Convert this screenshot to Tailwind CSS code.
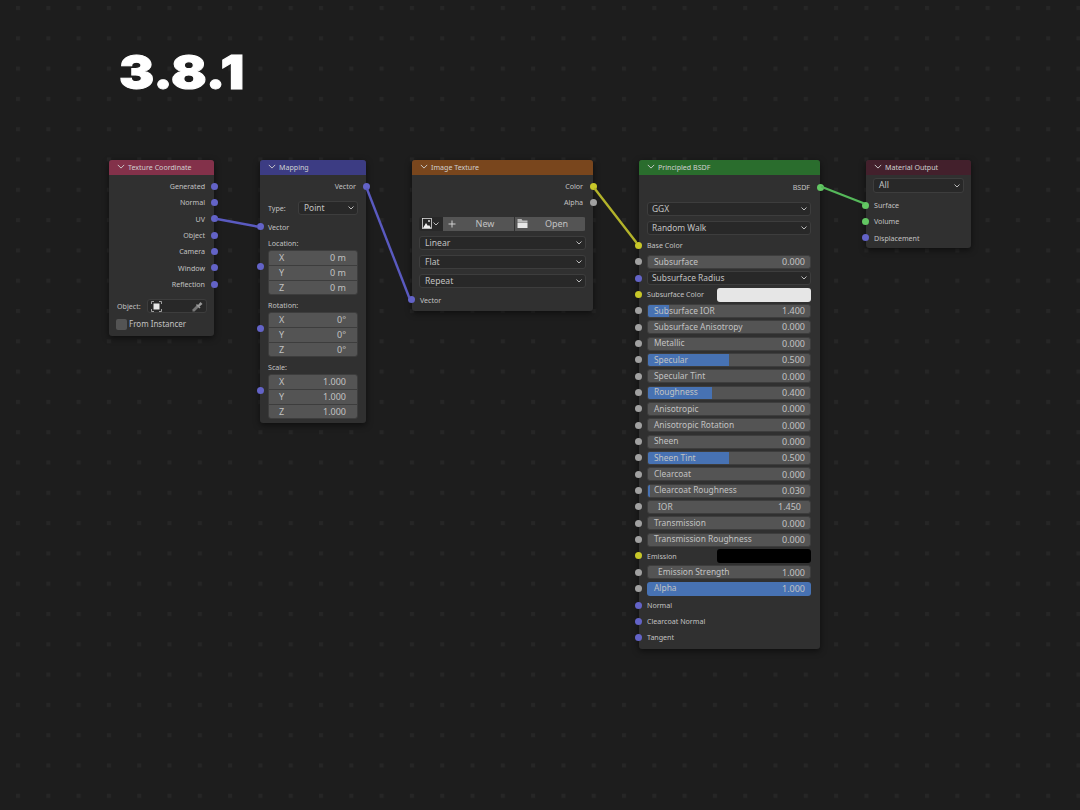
<!DOCTYPE html>
<html lang="en">
<head>
    <meta charset="UTF-8">
    <title>Blender 3.8.1 nodes</title>
    <script src="https://cdn.jsdelivr.net/npm/@tailwindcss/browser@4"></script>
</head>
<body class="bg-[#1d1d1d]">
<div class="relative w-[1080px] h-[810px] overflow-hidden bg-[#1d1d1d] font-['Noto_Sans',sans-serif] text-[#c2c2c2] text-[7.1px]">

    <!-- dot grid -->
    <svg class="absolute inset-0" width="1080" height="810">
        <defs>
            <pattern id="grid" x="16" y="6" width="30.3" height="30.3" patternUnits="userSpaceOnUse">
                <rect width="4" height="4" fill="#262626"/>
            </pattern>
        </defs>
        <rect width="1080" height="810" fill="url(#grid)"/>
    </svg>

    <h1 class="absolute left-[119px] top-[44px] origin-left scale-x-[1.12] font-['Inter',sans-serif] font-black text-[47px] leading-[56px] text-white [-webkit-text-stroke:1px_white]">3.8.1</h1>

    <!-- Texture Coordinate -->
    <section class="absolute left-[109px] top-[160px] w-[105px] h-[176px] rounded-[3px] bg-[#303030] shadow-[0_2px_6px_rgba(0,0,0,0.55)] flex flex-col">
        <header class="h-[15px] rounded-t-[3px] bg-[#83314a] flex items-center pl-[8px] gap-[3px] text-[#d0d0d0]">
            <svg class="-mt-[2px]" width="8" height="5" viewBox="0 0 10 6"><path d="M1 1l4 4 4-4" fill="none" stroke="#ccc" stroke-width="1.2"/></svg>
            <span>Texture Coordinate</span>
        </header>
        <div class="pt-[3px] flex flex-col">
            <div class="relative h-[16.35px] flex items-center justify-end pr-[9px]">Generated<i class="absolute right-[-3.5px] top-[4.6px] size-[7px] rounded-full bg-[#6363c7]"></i></div>
            <div class="relative h-[16.35px] flex items-center justify-end pr-[9px]">Normal<i class="absolute right-[-3.5px] top-[4.6px] size-[7px] rounded-full bg-[#6363c7]"></i></div>
            <div class="relative h-[16.35px] flex items-center justify-end pr-[9px]">UV<i class="absolute right-[-3.5px] top-[4.6px] size-[7px] rounded-full bg-[#6363c7]"></i></div>
            <div class="relative h-[16.35px] flex items-center justify-end pr-[9px]">Object<i class="absolute right-[-3.5px] top-[4.6px] size-[7px] rounded-full bg-[#6363c7]"></i></div>
            <div class="relative h-[16.35px] flex items-center justify-end pr-[9px]">Camera<i class="absolute right-[-3.5px] top-[4.6px] size-[7px] rounded-full bg-[#6363c7]"></i></div>
            <div class="relative h-[16.35px] flex items-center justify-end pr-[9px]">Window<i class="absolute right-[-3.5px] top-[4.6px] size-[7px] rounded-full bg-[#6363c7]"></i></div>
            <div class="relative h-[16.35px] flex items-center justify-end pr-[9px]">Reflection<i class="absolute right-[-3.5px] top-[4.6px] size-[7px] rounded-full bg-[#6363c7]"></i></div>
            <div class="mt-[6px] h-[16px] flex items-center pl-[8px] pr-[7px] justify-between">
                <span>Object:</span>
                <div class="w-[60px] h-[14px] rounded-[3px] bg-[#282828] border border-[#3d3d3d] flex items-center justify-between px-[3px]">
                    <svg width="11" height="11" viewBox="0 0 11 11"><rect x="2.5" y="2.5" width="6" height="6" fill="#e6e6e6"/><path d="M.5 3V.5H3M8 .5h2.5V3M.5 8v2.5H3M8 10.5h2.5V8" fill="none" stroke="#bbb" stroke-width=".8"/></svg>
                    <svg width="11" height="11" viewBox="0 0 11 11"><path d="M.5 10.5v-2l4.5-4.5 2 2-4.5 4.5z" fill="#777"/><path d="M5 3l1 1 2.5-3 2 2-3 2.5 1 1-1 1L4 4z" fill="#9a9a9a"/></svg>
                </div>
            </div>
            <div class="mt-[3px] h-[14px] flex items-center pl-[7px] gap-[2px] text-[8px]">
                <span class="size-[11px] rounded-[2px] bg-[#545454]"></span>
                <span>From Instancer</span>
            </div>
        </div>
    </section>

    <!-- Mapping -->
    <section class="absolute left-[260px] top-[160px] w-[106px] h-[263px] rounded-[3px] bg-[#303030] shadow-[0_2px_6px_rgba(0,0,0,0.55)] flex flex-col">
        <header class="h-[15px] rounded-t-[3px] bg-[#3c3c83] flex items-center pl-[8px] gap-[3px] text-[#d0d0d0]">
            <svg class="-mt-[2px]" width="8" height="5" viewBox="0 0 10 6"><path d="M1 1l4 4 4-4" fill="none" stroke="#ccc" stroke-width="1.2"/></svg>
            <span>Mapping</span>
        </header>
        <div class="pt-[3px] flex flex-col">
            <div class="relative h-[16.35px] flex items-center justify-end pr-[10px]">Vector<i class="absolute right-[-3.5px] top-[4.6px] size-[7px] rounded-full bg-[#6363c7]"></i></div>
            <div class="mt-[4px] h-[19px] flex items-center pl-[8px] pr-[8px] justify-between">
                <span>Type:</span>
                <div class="w-[60px] h-[14px] rounded-[3px] bg-[#282828] border border-[#3d3d3d] flex items-center justify-between pl-[5px] pr-[3px] text-[8.4px]">
                    <span>Point</span>
                    <svg width="6" height="4" viewBox="0 0 6 4"><path d="M.5 .5L3 3 5.5 .5" fill="none" stroke="#ccc" stroke-width=".9"/></svg>
                </div>
            </div>
            <div class="relative mt-[1.5px] h-[16.35px] flex items-center pl-[8px]">Vector<i class="absolute left-[-3.5px] top-[4.6px] size-[7px] rounded-full bg-[#6363c7]"></i></div>
            <div class="h-[15px] pt-[1px] flex items-center pl-[8px]">Location:</div>
            <div class="mx-[8px] h-[45px] rounded-[3px] overflow-hidden flex flex-col gap-[1px] bg-[#3d3d3d] text-[9px] border border-[#3d3d3d]">
                <div class="flex-1 bg-[#545454] flex items-center justify-between pl-[10px] pr-[11px]"><span>X</span><span>0 m</span></div>
                <div class="flex-1 bg-[#545454] flex items-center justify-between pl-[10px] pr-[11px]"><span>Y</span><span>0 m</span></div>
                <div class="flex-1 bg-[#545454] flex items-center justify-between pl-[10px] pr-[11px]"><span>Z</span><span>0 m</span></div>
            </div>
            <div class="h-[17px] pt-[3px] flex items-center pl-[8px]">Rotation:</div>
            <div class="mx-[8px] h-[45px] rounded-[3px] overflow-hidden flex flex-col gap-[1px] bg-[#3d3d3d] text-[9px] border border-[#3d3d3d]">
                <div class="flex-1 bg-[#545454] flex items-center justify-between pl-[10px] pr-[11px]"><span>X</span><span>0°</span></div>
                <div class="flex-1 bg-[#545454] flex items-center justify-between pl-[10px] pr-[11px]"><span>Y</span><span>0°</span></div>
                <div class="flex-1 bg-[#545454] flex items-center justify-between pl-[10px] pr-[11px]"><span>Z</span><span>0°</span></div>
            </div>
            <div class="h-[17px] pt-[3px] flex items-center pl-[8px]">Scale:</div>
            <div class="mx-[8px] h-[45px] rounded-[3px] overflow-hidden flex flex-col gap-[1px] bg-[#3d3d3d] text-[9px] border border-[#3d3d3d]">
                <div class="flex-1 bg-[#545454] flex items-center justify-between pl-[10px] pr-[11px]"><span>X</span><span>1.000</span></div>
                <div class="flex-1 bg-[#545454] flex items-center justify-between pl-[10px] pr-[11px]"><span>Y</span><span>1.000</span></div>
                <div class="flex-1 bg-[#545454] flex items-center justify-between pl-[10px] pr-[11px]"><span>Z</span><span>1.000</span></div>
            </div>
        </div>
        <i class="absolute left-[-3.5px] top-[102.5px] size-[7px] rounded-full bg-[#6363c7]"></i>
        <i class="absolute left-[-3.5px] top-[164.5px] size-[7px] rounded-full bg-[#6363c7]"></i>
        <i class="absolute left-[-3.5px] top-[226.5px] size-[7px] rounded-full bg-[#6363c7]"></i>
    </section>

    <!-- Image Texture -->
    <section class="absolute left-[412px] top-[160px] w-[181px] h-[151px] rounded-[3px] bg-[#303030] shadow-[0_2px_6px_rgba(0,0,0,0.55)] flex flex-col">
        <header class="h-[15px] rounded-t-[3px] bg-[#79461d] flex items-center pl-[8px] gap-[3px] text-[#d0d0d0]">
            <svg class="-mt-[2px]" width="8" height="5" viewBox="0 0 10 6"><path d="M1 1l4 4 4-4" fill="none" stroke="#ccc" stroke-width="1.2"/></svg>
            <span>Image Texture</span>
        </header>
        <div class="pt-[3px] flex flex-col">
            <div class="relative h-[16.35px] flex items-center justify-end pr-[10px]">Color<i class="absolute right-[-3.5px] top-[4.6px] size-[7px] rounded-full bg-[#c7c729]"></i></div>
            <div class="relative h-[16.35px] flex items-center justify-end pr-[10px]">Alpha<i class="absolute right-[-3.5px] top-[4.6px] size-[7px] rounded-full bg-[#a1a1a1]"></i></div>
            <div class="mt-[6px] mx-[7px] h-[14px] rounded-[3px] overflow-hidden flex text-[9px]">
                <div class="w-[24px] bg-[#282828] flex items-center pl-[3px] gap-[1px]">
                    <svg width="10" height="11" viewBox="0 0 10 11"><rect x=".5" y=".5" width="9" height="10" fill="#282828" stroke="#ddd" stroke-width=".8"/><path d="M1 10l3-5 2 3 1-1 2 3z" fill="#eee"/><circle cx="7" cy="3" r="1" fill="#ddd"/></svg>
                    <svg width="6" height="4" viewBox="0 0 6 4"><path d="M.5 .5L3 3 5.5 .5" fill="none" stroke="#ccc" stroke-width=".9"/></svg>
                </div>
                <div class="w-[71px] bg-[#545454] flex items-center pl-[5px]">
                    <svg width="8" height="8" viewBox="0 0 8 8"><path d="M4 .5v7M.5 4h7" stroke="#ddd" stroke-width=".9"/></svg>
                    <span class="flex-1 text-center">New</span>
                </div>
                <div class="w-[70px] ml-[1px] bg-[#545454] flex items-center pl-[2px]">
                    <svg width="11" height="11" viewBox="0 0 11 11"><path d="M.5 1h4l1 1.5h5V4H.5z" fill="#bbb"/><path d="M.5 4.5h10V10H.5z" fill="#e6e6e6"/></svg>
                    <span class="flex-1 text-center">Open</span>
                </div>
            </div>
            <div class="mt-[5.5px] mx-[7px] h-[14px] rounded-[3px] bg-[#282828] border border-[#3d3d3d] flex items-center justify-between pl-[5px] pr-[3px] text-[8.6px]">
                <span>Linear</span>
                <svg width="6" height="4" viewBox="0 0 6 4"><path d="M.5 .5L3 3 5.5 .5" fill="none" stroke="#ccc" stroke-width=".9"/></svg>
            </div>
            <div class="mt-[5px] mx-[7px] h-[14px] rounded-[3px] bg-[#282828] border border-[#3d3d3d] flex items-center justify-between pl-[5px] pr-[3px] text-[8.6px]">
                <span>Flat</span>
                <svg width="6" height="4" viewBox="0 0 6 4"><path d="M.5 .5L3 3 5.5 .5" fill="none" stroke="#ccc" stroke-width=".9"/></svg>
            </div>
            <div class="mt-[5px] mx-[7px] h-[14px] rounded-[3px] bg-[#282828] border border-[#3d3d3d] flex items-center justify-between pl-[5px] pr-[3px] text-[8.6px]">
                <span>Repeat</span>
                <svg width="6" height="4" viewBox="0 0 6 4"><path d="M.5 .5L3 3 5.5 .5" fill="none" stroke="#ccc" stroke-width=".9"/></svg>
            </div>
            <div class="relative mt-[3.5px] h-[16.35px] flex items-center pl-[8px]">Vector<i class="absolute left-[-4.5px] top-[4.6px] size-[7px] rounded-full bg-[#6363c7]"></i></div>
        </div>
    </section>

    <!-- Principled BSDF -->
    <section class="absolute left-[639px] top-[160px] w-[181px] h-[489px] rounded-[3px] bg-[#303030] shadow-[0_2px_6px_rgba(0,0,0,0.55)] flex flex-col">
        <header class="h-[15px] rounded-t-[3px] bg-[#2a6d2d] flex items-center pl-[8px] gap-[3px] text-[#d0d0d0]">
            <svg class="-mt-[2px]" width="8" height="5" viewBox="0 0 10 6"><path d="M1 1l4 4 4-4" fill="none" stroke="#ccc" stroke-width="1.2"/></svg>
            <span>Principled BSDF</span>
        </header>
        <div class="pt-[4px] flex flex-col text-[8.4px]">
            <div class="relative h-[16.35px] flex items-center justify-end pr-[10px] text-[7.1px]">BSDF<i class="absolute right-[-3.5px] top-[4.6px] size-[7px] rounded-full bg-[#63c763]"></i></div>
            <div class="mt-[4px] h-[19px] pl-[8px] pr-[9px] flex items-center">
                <div class="w-full h-[14px] rounded-[3px] bg-[#282828] border border-[#3d3d3d] flex items-center justify-between pl-[4px] pr-[3px]">
                    <span>GGX</span>
                    <svg width="6" height="4" viewBox="0 0 6 4"><path d="M.5 .5L3 3 5.5 .5" fill="none" stroke="#ccc" stroke-width=".9"/></svg>
                </div>
            </div>
            <div class="h-[19px] pl-[8px] pr-[9px] flex items-center">
                <div class="w-full h-[14px] rounded-[3px] bg-[#282828] border border-[#3d3d3d] flex items-center justify-between pl-[4px] pr-[3px]">
                    <span>Random Walk</span>
                    <svg width="6" height="4" viewBox="0 0 6 4"><path d="M.5 .5L3 3 5.5 .5" fill="none" stroke="#ccc" stroke-width=".9"/></svg>
                </div>
            </div>
            <div class="relative h-[16.35px] flex items-center pl-[8px] text-[7.1px]">Base Color<i class="absolute left-[-4.5px] top-[4.6px] size-[7px] rounded-full bg-[#c7c729]"></i></div>

            <div class="relative h-[16.35px] pl-[8px] pr-[9px] flex items-center"><i class="absolute left-[-4.5px] top-[4.6px] size-[7px] rounded-full bg-[#a1a1a1]"></i>
                <div class="w-full h-[14px] rounded-[3px] bg-[#545454] border border-[#3d3d3d] flex items-center justify-between pl-[6px] pr-[5px]"><span>Subsurface</span><span class="text-[9px]">0.000</span></div>
            </div>
            <div class="relative h-[16.35px] pl-[8px] pr-[9px] flex items-center"><i class="absolute left-[-4.5px] top-[4.6px] size-[7px] rounded-full bg-[#6363c7]"></i>
                <div class="w-full h-[14px] rounded-[3px] bg-[#282828] border border-[#3d3d3d] flex items-center justify-between pl-[4px] pr-[3px]"><span>Subsurface Radius</span>
                    <svg width="6" height="4" viewBox="0 0 6 4"><path d="M.5 .5L3 3 5.5 .5" fill="none" stroke="#ccc" stroke-width=".9"/></svg>
                </div>
            </div>
            <div class="relative h-[16.35px] pl-[8px] pr-[9px] flex items-center justify-between text-[7.1px]"><i class="absolute left-[-4.5px] top-[4.6px] size-[7px] rounded-full bg-[#c7c729]"></i>
                <span>Subsurface Color</span><div class="w-[94px] h-[14px] rounded-[3px] bg-[#e6e6e6]"></div>
            </div>
            <div class="relative h-[16.35px] pl-[8px] pr-[9px] flex items-center"><i class="absolute left-[-4.5px] top-[4.6px] size-[7px] rounded-full bg-[#a1a1a1]"></i>
                <div class="relative w-full h-[14px] rounded-[3px] overflow-hidden bg-[#545454] border border-[#3d3d3d] flex items-center justify-between pl-[6px] pr-[5px]"><b class="absolute left-0 inset-y-0 w-[21px] bg-[#4772b3]"></b><span class="relative">Subsurface IOR</span><span class="relative text-[9px]">1.400</span></div>
            </div>
            <div class="relative h-[16.35px] pl-[8px] pr-[9px] flex items-center"><i class="absolute left-[-4.5px] top-[4.6px] size-[7px] rounded-full bg-[#a1a1a1]"></i>
                <div class="w-full h-[14px] rounded-[3px] bg-[#545454] border border-[#3d3d3d] flex items-center justify-between pl-[6px] pr-[5px]"><span>Subsurface Anisotropy</span><span class="text-[9px]">0.000</span></div>
            </div>
            <div class="relative h-[16.35px] pl-[8px] pr-[9px] flex items-center"><i class="absolute left-[-4.5px] top-[4.6px] size-[7px] rounded-full bg-[#a1a1a1]"></i>
                <div class="w-full h-[14px] rounded-[3px] bg-[#545454] border border-[#3d3d3d] flex items-center justify-between pl-[6px] pr-[5px]"><span>Metallic</span><span class="text-[9px]">0.000</span></div>
            </div>
            <div class="relative h-[16.35px] pl-[8px] pr-[9px] flex items-center"><i class="absolute left-[-4.5px] top-[4.6px] size-[7px] rounded-full bg-[#a1a1a1]"></i>
                <div class="relative w-full h-[14px] rounded-[3px] overflow-hidden bg-[#545454] border border-[#3d3d3d] flex items-center justify-between pl-[6px] pr-[5px]"><b class="absolute left-0 inset-y-0 w-[81px] bg-[#4772b3]"></b><span class="relative">Specular</span><span class="relative text-[9px]">0.500</span></div>
            </div>
            <div class="relative h-[16.35px] pl-[8px] pr-[9px] flex items-center"><i class="absolute left-[-4.5px] top-[4.6px] size-[7px] rounded-full bg-[#a1a1a1]"></i>
                <div class="w-full h-[14px] rounded-[3px] bg-[#545454] border border-[#3d3d3d] flex items-center justify-between pl-[6px] pr-[5px]"><span>Specular Tint</span><span class="text-[9px]">0.000</span></div>
            </div>
            <div class="relative h-[16.35px] pl-[8px] pr-[9px] flex items-center"><i class="absolute left-[-4.5px] top-[4.6px] size-[7px] rounded-full bg-[#a1a1a1]"></i>
                <div class="relative w-full h-[14px] rounded-[3px] overflow-hidden bg-[#545454] border border-[#3d3d3d] flex items-center justify-between pl-[6px] pr-[5px]"><b class="absolute left-0 inset-y-0 w-[64px] bg-[#4772b3]"></b><span class="relative">Roughness</span><span class="relative text-[9px]">0.400</span></div>
            </div>
            <div class="relative h-[16.35px] pl-[8px] pr-[9px] flex items-center"><i class="absolute left-[-4.5px] top-[4.6px] size-[7px] rounded-full bg-[#a1a1a1]"></i>
                <div class="w-full h-[14px] rounded-[3px] bg-[#545454] border border-[#3d3d3d] flex items-center justify-between pl-[6px] pr-[5px]"><span>Anisotropic</span><span class="text-[9px]">0.000</span></div>
            </div>
            <div class="relative h-[16.35px] pl-[8px] pr-[9px] flex items-center"><i class="absolute left-[-4.5px] top-[4.6px] size-[7px] rounded-full bg-[#a1a1a1]"></i>
                <div class="w-full h-[14px] rounded-[3px] bg-[#545454] border border-[#3d3d3d] flex items-center justify-between pl-[6px] pr-[5px]"><span>Anisotropic Rotation</span><span class="text-[9px]">0.000</span></div>
            </div>
            <div class="relative h-[16.35px] pl-[8px] pr-[9px] flex items-center"><i class="absolute left-[-4.5px] top-[4.6px] size-[7px] rounded-full bg-[#a1a1a1]"></i>
                <div class="w-full h-[14px] rounded-[3px] bg-[#545454] border border-[#3d3d3d] flex items-center justify-between pl-[6px] pr-[5px]"><span>Sheen</span><span class="text-[9px]">0.000</span></div>
            </div>
            <div class="relative h-[16.35px] pl-[8px] pr-[9px] flex items-center"><i class="absolute left-[-4.5px] top-[4.6px] size-[7px] rounded-full bg-[#a1a1a1]"></i>
                <div class="relative w-full h-[14px] rounded-[3px] overflow-hidden bg-[#545454] border border-[#3d3d3d] flex items-center justify-between pl-[6px] pr-[5px]"><b class="absolute left-0 inset-y-0 w-[81px] bg-[#4772b3]"></b><span class="relative">Sheen Tint</span><span class="relative text-[9px]">0.500</span></div>
            </div>
            <div class="relative h-[16.35px] pl-[8px] pr-[9px] flex items-center"><i class="absolute left-[-4.5px] top-[4.6px] size-[7px] rounded-full bg-[#a1a1a1]"></i>
                <div class="w-full h-[14px] rounded-[3px] bg-[#545454] border border-[#3d3d3d] flex items-center justify-between pl-[6px] pr-[5px]"><span>Clearcoat</span><span class="text-[9px]">0.000</span></div>
            </div>
            <div class="relative h-[16.35px] pl-[8px] pr-[9px] flex items-center"><i class="absolute left-[-4.5px] top-[4.6px] size-[7px] rounded-full bg-[#a1a1a1]"></i>
                <div class="relative w-full h-[14px] rounded-[3px] overflow-hidden bg-[#545454] border border-[#3d3d3d] flex items-center justify-between pl-[6px] pr-[5px]"><b class="absolute left-0 inset-y-0 w-[2px] bg-[#4772b3]"></b><span class="relative">Clearcoat Roughness</span><span class="relative text-[9px]">0.030</span></div>
            </div>
            <div class="relative h-[16.35px] pl-[8px] pr-[9px] flex items-center"><i class="absolute left-[-4.5px] top-[4.6px] size-[7px] rounded-full bg-[#a1a1a1]"></i>
                <div class="w-full h-[14px] rounded-[3px] bg-[#545454] border border-[#3d3d3d] flex items-center justify-between pl-[10px] pr-[9px]"><span>IOR</span><span class="text-[9px]">1.450</span></div>
            </div>
            <div class="relative h-[16.35px] pl-[8px] pr-[9px] flex items-center"><i class="absolute left-[-4.5px] top-[4.6px] size-[7px] rounded-full bg-[#a1a1a1]"></i>
                <div class="w-full h-[14px] rounded-[3px] bg-[#545454] border border-[#3d3d3d] flex items-center justify-between pl-[6px] pr-[5px]"><span>Transmission</span><span class="text-[9px]">0.000</span></div>
            </div>
            <div class="relative h-[16.35px] pl-[8px] pr-[9px] flex items-center"><i class="absolute left-[-4.5px] top-[4.6px] size-[7px] rounded-full bg-[#a1a1a1]"></i>
                <div class="w-full h-[14px] rounded-[3px] bg-[#545454] border border-[#3d3d3d] flex items-center justify-between pl-[6px] pr-[5px]"><span>Transmission Roughness</span><span class="text-[9px]">0.000</span></div>
            </div>
            <div class="relative h-[16.35px] pl-[8px] pr-[9px] flex items-center justify-between text-[7.1px]"><i class="absolute left-[-4.5px] top-[4.6px] size-[7px] rounded-full bg-[#c7c729]"></i>
                <span>Emission</span><div class="w-[94px] h-[14px] rounded-[3px] bg-black"></div>
            </div>
            <div class="relative h-[16.35px] pl-[8px] pr-[9px] flex items-center"><i class="absolute left-[-4.5px] top-[4.6px] size-[7px] rounded-full bg-[#a1a1a1]"></i>
                <div class="w-full h-[14px] rounded-[3px] bg-[#545454] border border-[#3d3d3d] flex items-center justify-between pl-[10px] pr-[5px]"><span>Emission Strength</span><span class="text-[9px]">1.000</span></div>
            </div>
            <div class="relative h-[16.35px] pl-[8px] pr-[9px] flex items-center"><i class="absolute left-[-4.5px] top-[4.6px] size-[7px] rounded-full bg-[#a1a1a1]"></i>
                <div class="w-full h-[14px] rounded-[3px] bg-[#4772b3] flex items-center justify-between pl-[7px] pr-[6px]"><span>Alpha</span><span class="text-[9px]">1.000</span></div>
            </div>
            <div class="relative h-[16.35px] flex items-center pl-[8px] text-[7.1px]">Normal<i class="absolute left-[-4.5px] top-[4.6px] size-[7px] rounded-full bg-[#6363c7]"></i></div>
            <div class="relative h-[16.35px] flex items-center pl-[8px] text-[7.1px]">Clearcoat Normal<i class="absolute left-[-4.5px] top-[4.6px] size-[7px] rounded-full bg-[#6363c7]"></i></div>
            <div class="relative h-[16.35px] flex items-center pl-[8px] text-[7.1px]">Tangent<i class="absolute left-[-4.5px] top-[4.6px] size-[7px] rounded-full bg-[#6363c7]"></i></div>
        </div>
    </section>

    <!-- Material Output -->
    <section class="absolute left-[866px] top-[160px] w-[105px] h-[88px] rounded-[3px] bg-[#303030] shadow-[0_2px_6px_rgba(0,0,0,0.55)] flex flex-col">
        <header class="h-[15px] rounded-t-[3px] bg-[#43202c] flex items-center pl-[8px] gap-[3px] text-[#d0d0d0]">
            <svg class="-mt-[2px]" width="8" height="5" viewBox="0 0 10 6"><path d="M1 1l4 4 4-4" fill="none" stroke="#ccc" stroke-width="1.2"/></svg>
            <span>Material Output</span>
        </header>
        <div class="pt-[3px] flex flex-col">
            <div class="mx-[7px] h-[15px] rounded-[3px] bg-[#282828] border border-[#3d3d3d] flex items-center justify-between pl-[5px] pr-[3px] text-[8.6px]">
                <span>All</span>
                <svg width="6" height="4" viewBox="0 0 6 4"><path d="M.5 .5L3 3 5.5 .5" fill="none" stroke="#ccc" stroke-width=".9"/></svg>
            </div>
            <div class="relative mt-[4px] h-[16.35px] flex items-center pl-[8px]">Surface<i class="absolute left-[-4.5px] top-[4.6px] size-[7px] rounded-full bg-[#63c763]"></i></div>
            <div class="relative h-[16.35px] flex items-center pl-[8px]">Volume<i class="absolute left-[-4.5px] top-[4.6px] size-[7px] rounded-full bg-[#63c763]"></i></div>
            <div class="relative h-[16.35px] flex items-center pl-[8px]">Displacement<i class="absolute left-[-4.5px] top-[4.6px] size-[7px] rounded-full bg-[#6363c7]"></i></div>
        </div>
    </section>

    <svg class="absolute inset-0 pointer-events-none" width="1080" height="810" fill="none" stroke-width="2.4" stroke-linecap="round">
        <path d="M217 219L257 226.5" stroke="#5a5ac0"/>
        <path d="M367 189L409 297" stroke="#5a5ac0"/>
        <path d="M595 189L636 242" stroke="#b3b32a"/>
        <path d="M822 187L863 203" stroke="#55b85a"/>
    </svg>
</div>
</body>
</html>
